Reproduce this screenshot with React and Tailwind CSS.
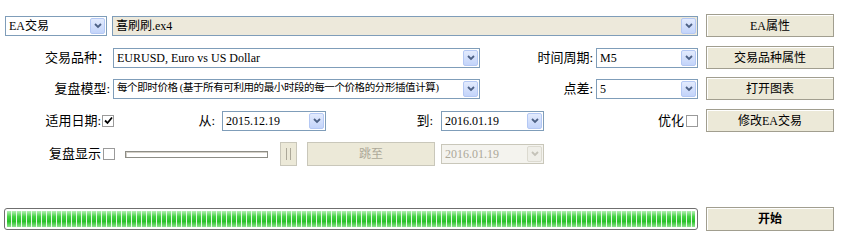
import clsx from "clsx";

const cjk = "font-['Liberation_Serif','Noto_Sans_CJK_SC',serif]";

const Arrow = ({ disabled }) => (
  <span
    className={clsx(
      "m-[1px] flex h-[16px] w-[15px] shrink-0 items-center justify-center rounded-[2px] border",
      disabled
        ? "border-[#dcdad0] bg-[#efeee8]"
        : "border-[#b4c8f4] bg-[linear-gradient(#e3ebfd,#c3d4fa)]"
    )}
  >
    <svg width="8" height="6" viewBox="0 0 8 6">
      <path
        d="M1 1 L4 4 L7 1"
        fill="none"
        stroke={disabled ? "#c4c2b8" : "#4d6185"}
        strokeWidth="1.8"
      />
    </svg>
  </span>
);

const Combo = ({ className, text, beige, disabled, small }) => (
  <div
    className={clsx(
      "flex h-[20px] shrink-0 items-center border",
      small ? "text-[10.5px] tracking-[-0.4px]" : "text-[12px]",
      disabled
        ? "border-[#c9c7ba] bg-[#f4f3ee] text-[#aca899]"
        : "border-[#7f9db9] text-black",
      beige ? "bg-[#ede9db]" : !disabled && "bg-white",
      className
    )}
  >
    <span className="min-w-0 flex-1 whitespace-nowrap pl-[3px] leading-none">{text}</span>
    <Arrow disabled={disabled} />
  </div>
);

const Btn = ({ children, bold, disabled, className }) => (
  <div
    className={clsx(
      "flex h-[23px] w-[128px] shrink-0 items-center justify-center border text-[12px]",
      disabled
        ? "border-[#c9c7ba] bg-[#ece9d8] text-[#aca899]"
        : "border-[#a19e8f] bg-[#ece9d8] text-black shadow-[inset_1px_1px_0_#fff]",
      bold && "font-bold",
      className
    )}
  >
    {children}
  </div>
);

const Check = ({ checked, className }) => (
  <span
    className={clsx(
      "flex h-[12px] w-[12px] shrink-0 items-center justify-center border border-[#9a9a9a] bg-white",
      className
    )}
  >
    {checked && (
      <svg width="9" height="9" viewBox="0 0 9 9">
        <path d="M1 4.5 L3.5 7 L8 1.5" fill="none" stroke="#000" strokeWidth="1.8" />
      </svg>
    )}
  </span>
);

const Label = ({ children, className }) => (
  <div className={clsx("shrink-0 text-right text-[13px] text-black", className)}>{children}</div>
);

export default function App() {
  return (
    <div className={clsx("flex h-[243px] w-[842px] flex-col bg-white pt-[14px]", cjk)}>
      <div className="flex h-[23px] items-center">
        <Combo className="ml-[5px] w-[102px]" text="EA交易" />
        <Combo className="ml-[5px] w-[586px]" text="喜刷刷.ex4" beige />
        <Btn className="ml-[8px]">EA属性</Btn>
      </div>

      <div className="mt-[9px] flex h-[23px] items-center">
        <Label className="w-[113px] pr-[3px]">交易品种：</Label>
        <Combo className="w-[367px]" text="EURUSD, Euro vs US Dollar" />
        <Label className="w-[116px] pr-[3px]">时间周期:</Label>
        <Combo className="w-[102px]" text="M5" />
        <Btn className="ml-[8px]">交易品种属性</Btn>
      </div>

      <div className="mt-[8px] flex h-[23px] items-center">
        <Label className="w-[113px] pr-[3px]">复盘模型:</Label>
        <Combo
          small
          className="w-[367px]"
          text="每个即时价格 (基于所有可利用的最小时段的每一个价格的分形插值计算)"
        />
        <Label className="w-[116px] pr-[3px]">点差:</Label>
        <Combo className="w-[102px]" text="5" />
        <Btn className="ml-[8px]">打开图表</Btn>
      </div>

      <div className="mt-[9px] flex h-[23px] items-center">
        <Label className="w-[101px]">适用日期:</Label>
        <Check checked className="ml-[1px]" />
        <Label className="w-[108px] pr-[7px]">从:</Label>
        <Combo className="w-[104px]" text="2015.12.19" />
        <Label className="w-[115px] pr-[8px]">到:</Label>
        <Combo className="w-[103px]" text="2016.01.19" />
        <Label className="w-[142px] pr-[2px]">优化</Label>
        <Check />
        <Btn className="ml-[8px]">修改EA交易</Btn>
      </div>

      <div className="mt-[10px] flex h-[24px] items-center">
        <Label className="w-[101px]">复盘显示</Label>
        <Check className="ml-[2px]" />
        <div className="ml-[10px] h-[7px] w-[143px] shrink-0 border border-[#8d8d86] bg-white shadow-[inset_1px_1px_0_#d4d0c8]" />
        <div className="ml-[12px] flex h-[24px] w-[17px] shrink-0 items-center justify-center gap-[3px] border border-[#c9c7ba] bg-[#ece9d8]">
          <span className="h-[12px] w-[1px] bg-[#aca899]" />
          <span className="h-[12px] w-[1px] bg-[#aca899]" />
        </div>
        <Btn disabled className="ml-[10px] h-[24px]">
          跳至
        </Btn>
        <Combo className="ml-[6px] w-[103px]" text="2016.01.19" disabled />
      </div>

      <div className="mt-[41px] flex h-[23px] items-center">
        <div className="ml-[4px] h-[22px] w-[694px] shrink-0 rounded-[3px] border border-[#6f6f6f] bg-white p-[2px]">
          <div className="h-full w-full bg-[repeating-linear-gradient(90deg,transparent_0,transparent_3.6px,#e8f8e8_3.6px,#e8f8e8_5px),linear-gradient(#b6efb6,#45d245_35%,#28c128_65%,#8ee48e)]" />
        </div>
        <Btn bold className="ml-[8px] h-[24px]">
          开始
        </Btn>
      </div>
    </div>
  );
}
